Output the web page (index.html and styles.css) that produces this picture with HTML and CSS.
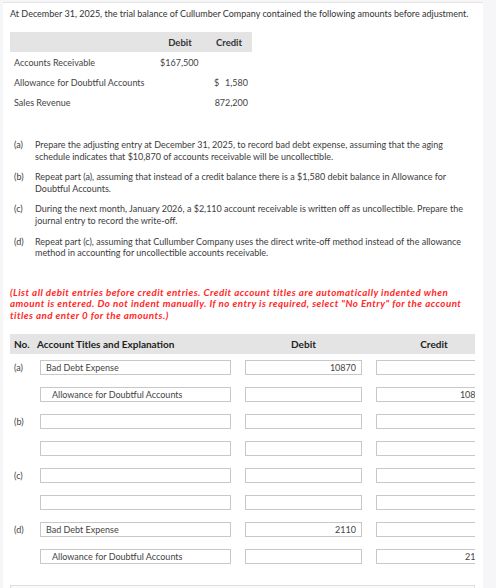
FILE: index.html
```html
<!DOCTYPE html>
<html lang="en">
<head>
<meta charset="utf-8">
<title>Cullumber Company</title>
<link rel="stylesheet" href="styles.css">
</head>
<body>
<div class="panel">
  <p class="intro">At December 31, 2025, the trial balance of Cullumber Company contained the following amounts before adjustment.</p>

  <div class="tb">
    <div class="tb-head">
      <span></span>
      <span class="tb-h">Debit</span>
      <span class="tb-h">Credit</span>
    </div>
    <div class="tb-row">
      <span class="tb-label">Accounts Receivable</span>
      <span class="tb-debit">$167,500</span>
      <span class="tb-credit"></span>
    </div>
    <div class="tb-row">
      <span class="tb-label">Allowance for Doubtful Accounts</span>
      <span class="tb-debit"></span>
      <span class="tb-credit"><span>$</span><span>1,580</span></span>
    </div>
    <div class="tb-row">
      <span class="tb-label">Sales Revenue</span>
      <span class="tb-debit"></span>
      <span class="tb-credit"><span></span><span>872,200</span></span>
    </div>
  </div>

  <ol class="parts">
    <li><span class="pl">(a)</span><span class="pt">Prepare the adjusting entry at December 31, 2025, to record bad debt expense, assuming that the aging schedule indicates that $10,870 of accounts receivable will be uncollectible.</span></li>
    <li><span class="pl">(b)</span><span class="pt">Repeat part (a), assuming that instead of a credit balance there is a $1,580 debit balance in Allowance for Doubtful Accounts.</span></li>
    <li><span class="pl">(c)</span><span class="pt">During the next month, January 2026, a $2,110 account receivable is written off as uncollectible. Prepare the journal entry to record the write-off.</span></li>
    <li><span class="pl">(d)</span><span class="pt">Repeat part (c), assuming that Cullumber Company uses the direct write-off method instead of the allowance method in accounting for uncollectible accounts receivable.</span></li>
  </ol>

  <p class="note">(List all debit entries before credit entries. Credit account titles are automatically indented when amount is entered. Do not indent manually. If no entry is required, select "No Entry" for the account titles and enter 0 for the amounts.)</p>

  <div class="journal">
    <div class="jgrid jhead">
      <span class="jh-no">No.</span>
      <span class="jh-acct">Account Titles and Explanation</span>
      <span class="jh-c">Debit</span>
      <span class="jh-c">Credit</span>
    </div>

    <div class="jgrid jrow">
      <span class="jno">(a)</span>
      <input class="fld" type="text" value="Bad Debt Expense">
      <input class="fld num" type="text" value="10870">
      <input class="fld num" type="text" value="">
    </div>
    <div class="jgrid jrow">
      <span class="jno"></span>
      <input class="fld indent" type="text" value="Allowance for Doubtful Accounts">
      <input class="fld num" type="text" value="">
      <input class="fld num" type="text" value="10870">
    </div>

    <div class="jgrid jrow">
      <span class="jno">(b)</span>
      <input class="fld" type="text" value="">
      <input class="fld num" type="text" value="">
      <input class="fld num" type="text" value="">
    </div>
    <div class="jgrid jrow">
      <span class="jno"></span>
      <input class="fld" type="text" value="">
      <input class="fld num" type="text" value="">
      <input class="fld num" type="text" value="">
    </div>

    <div class="jgrid jrow">
      <span class="jno">(c)</span>
      <input class="fld" type="text" value="">
      <input class="fld num" type="text" value="">
      <input class="fld num" type="text" value="">
    </div>
    <div class="jgrid jrow">
      <span class="jno"></span>
      <input class="fld" type="text" value="">
      <input class="fld num" type="text" value="">
      <input class="fld num" type="text" value="">
    </div>

    <div class="jgrid jrow">
      <span class="jno">(d)</span>
      <input class="fld" type="text" value="Bad Debt Expense">
      <input class="fld num" type="text" value="2110">
      <input class="fld num" type="text" value="">
    </div>
    <div class="jgrid jrow">
      <span class="jno"></span>
      <input class="fld indent" type="text" value="Allowance for Doubtful Accounts">
      <input class="fld num" type="text" value="">
      <input class="fld num" type="text" value="2110">
    </div>
  </div>

  <div class="next-box"></div>
</div>
</body>
</html>
```

FILE: styles.css
```css
* { box-sizing: border-box; }

html, body {
  margin: 0;
  padding: 0;
}

body {
  background: #f6f6f8;
  font-family: Lato, "Open Sans", Arial, sans-serif;
  font-size: 9px;
  color: #3c3c3c;
}

.panel {
  margin: 2px 0 0 3px;
  width: 480px;
  background: #ffffff;
  border-top: 1px solid #e4e4e4;
  padding: 4px 8px 0 7px;
  min-height: 600px;
}

.intro {
  margin: 0;
  line-height: 13px;
  color: #333;
}

/* trial balance */
.tb {
  margin-top: 12px;
  width: 242px;
  color: #444;
}

.tb-head, .tb-row {
  display: grid;
  grid-template-columns: 144px 52px 46px;
  height: 20px;
  align-items: center;
}

.tb-head {
  background: #e4e4e4;
}

.tb-h {
  text-align: center;
  font-weight: 700;
  font-size: 9.5px;
  color: #333;
}

.tb-label {
  padding-left: 4px;
}

.tb-debit {
  padding-left: 6px;
}

.tb-credit {
  display: flex;
  justify-content: space-between;
  padding: 0 4px 0 8px;
}

/* parts list */
.parts {
  list-style: none;
  margin: 27px 0 0;
  padding: 0;
  display: flex;
  flex-direction: column;
  gap: 9px;
  color: #3c3c3c;
}

.parts li {
  display: flex;
  line-height: 11.6px;
  padding-left: 4px;
}

.pl {
  flex: 0 0 21px;
}

.pt {
  flex: 1;
  padding-right: 2px;
}

.note {
  margin: 28px 0 0;
  color: #ff2828;
  font-weight: 700;
  font-style: italic;
  font-size: 9.8px;
  letter-spacing: 0.45px;
  line-height: 11.7px;
}

/* journal */
.journal {
  margin-top: 12px;
  width: 465px;
  overflow: hidden;
}

.jgrid {
  display: grid;
  grid-template-columns: 16px 191px 117px 116px;
  column-gap: 14px;
  width: 482px;
  align-items: center;
}

.jhead {
  height: 20px;
  background: #e4e4e4;
  font-weight: 700;
  font-size: 10px;
  color: #222;
}

.jh-no {
  padding-left: 4px;
  white-space: nowrap;
}

.jh-acct {
  margin-left: -3px;
  white-space: nowrap;
}

.jh-c {
  text-align: center;
}

.jrow {
  padding: 6px 0;
  height: 27px;
}

.jno {
  padding-left: 4px;
  color: #444;
}

.fld {
  display: block;
  width: 100%;
  height: 15px;
  margin: 0;
  border: 1px solid #c8c8c8;
  border-radius: 0;
  background: #fff;
  padding: 0 5px;
  font-family: Lato, "Open Sans", Arial, sans-serif;
  font-size: 9px;
  color: #444;
  outline: none;
}

.fld.indent {
  padding-left: 11px;
}

.fld.num {
  text-align: right;
}

.next-box {
  margin-top: 15px;
  width: 465px;
  height: 20px;
  border: 1px solid #dedede;
  background: #fafafa;
}
```
